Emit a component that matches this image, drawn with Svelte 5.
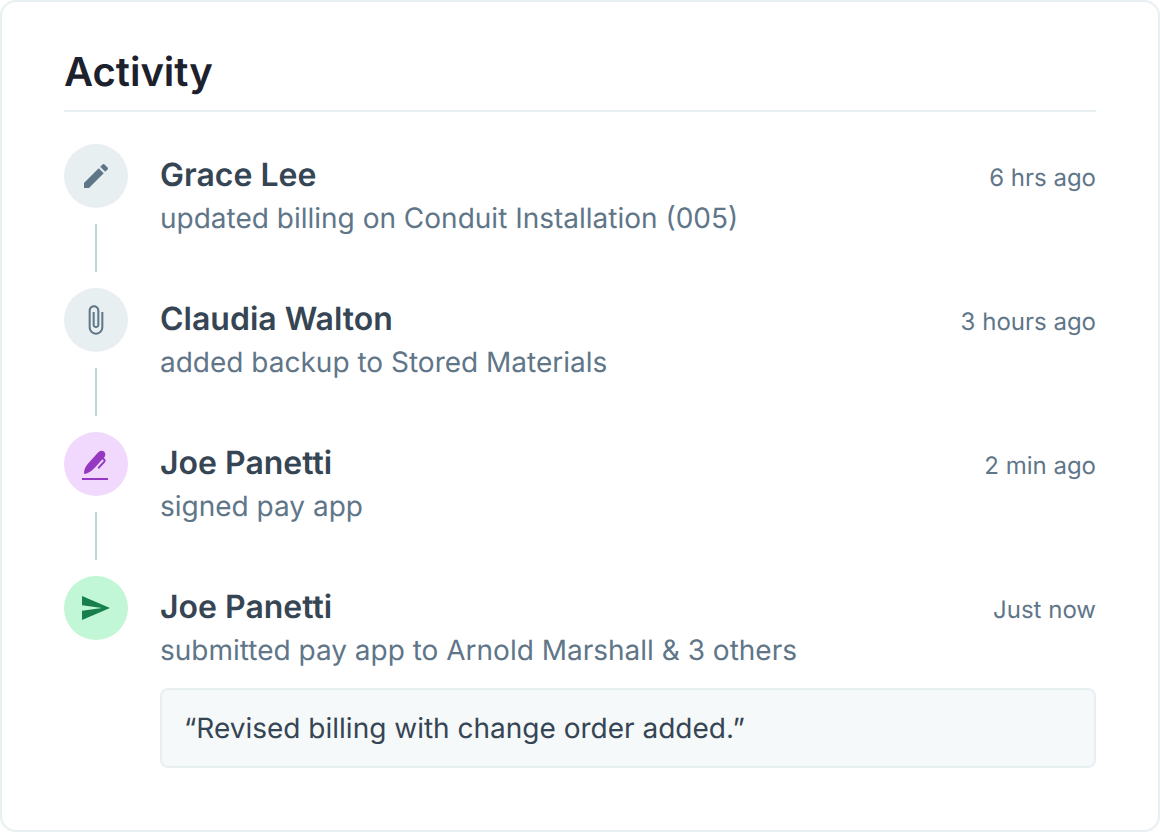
<script>
  const events = [
    { icon: 'pencil', tone: 'neutral', name: 'Grace Lee', action: 'updated billing on Conduit Installation (005)', time: '6 hrs ago' },
    { icon: 'clip', tone: 'neutral', name: 'Claudia Walton', action: 'added backup to Stored Materials', time: '3 hours ago' },
    { icon: 'sign', tone: 'purple', name: 'Joe Panetti', action: 'signed pay app', time: '2 min ago' },
    { icon: 'send', tone: 'green', name: 'Joe Panetti', action: 'submitted pay app to Arnold Marshall & 3 others', time: 'Just now', note: '“Revised billing with change order added.”' }
  ];
</script>

<section class="card" aria-labelledby="activity-title">
  <h2 id="activity-title">Activity</h2>
  <ol>
    {#each events as event, i}
      <li>
        <div class="rail">
          <span class="badge {event.tone}">
            {#if event.icon === 'pencil'}
              <svg viewBox="0 0 24 24" aria-hidden="true"><path d="M3 17.250V21h3.750L17.810 9.940l-3.750-3.750L3 17.250zM20.710 7.040c.39-.39.39-1.020 0-1.410l-2.340-2.340c-.39-.39-1.020-.39-1.410 0l-1.830 1.830 3.750 3.750 1.830-1.830z" /></svg>
            {:else if event.icon === 'clip'}
              <svg viewBox="0.500 0 24 24" aria-hidden="true"><path d="M16.500 6v11.500c0 2.210-1.790 4-4 4s-4-1.790-4-4V5c0-1.380 1.120-2.500 2.500-2.500s2.500 1.120 2.500 2.500v10.500c0 .55-.45 1-1 1s-1-.45-1-1V6H10v9.500c0 1.380 1.120 2.500 2.500 2.500s2.500-1.120 2.500-2.500V5c0-2.210-1.790-4-4-4S7 2.790 7 5v12.500c0 3.040 2.460 5.500 5.500 5.500s5.500-2.460 5.500-5.500V6h-1.500z" /></svg>
            {:else if event.icon === 'sign'}
              <svg viewBox="0 0 32 32" aria-hidden="true">
                <path d="M2 30h26v2H2z" />
                <path d="M4.100 26C3.700 22.500 5.300 18.800 8.100 15.600L17.800 4.800C19.600 2.400 22.500 2 24.200 3.700C25.700 5.200 25.500 7 24.700 8.700L15 19.500C12.200 22.500 8.500 25.600 4.100 26Z" />
                <path class="line" d="M22.800 10.200l1.500 1.500c.6.600.6 1.200 0 1.900L18.800 19.700" />
              </svg>
            {:else}
              <svg viewBox="0.500 0 24 24" aria-hidden="true"><path d="M2.010 21L23 12 2.010 3 2 10l15 2-15 2z" /></svg>
            {/if}
          </span>
          {#if i < events.length - 1}<span class="connector"></span>{/if}
        </div>
        <div class="body">
          <div class="heading">
            <h3>{event.name}</h3>
            <time>{event.time}</time>
          </div>
          <p>{event.action}</p>
          {#if event.note}<blockquote>{event.note}</blockquote>{/if}
        </div>
      </li>
    {/each}
  </ol>
</section>

<style>
  :global(body) { background: #fff; }
  .card {
    box-sizing: border-box;
    min-height: 100vh;
    padding: 46px 62px 62px;
    border: 2px solid #e8eff1;
    border-radius: 16px;
    background: #fff;
    font-family: Inter, sans-serif;
    font-weight: 400;
    text-rendering: geometricPrecision;
    color: #5f7689;
  }
  h2, h3, p, ol, blockquote { margin: 0; }
  h2 {
    padding-bottom: 14px;
    border-bottom: 2px solid #e8eff1;
    font-size: 40px;
    line-height: 48px;
    font-weight: 600;
    color: #1c212d;
  }
  ol { padding: 32px 0 0; list-style: none; }
  li { display: flex; gap: 32px; }
  .rail { display: flex; flex-direction: column; align-items: center; gap: 16px; }
  .badge {
    display: grid;
    place-items: center;
    width: 64px;
    height: 64px;
    border-radius: 50%;
  }
  .neutral { background: #e8eff1; color: #5f7689; }
  .purple { background: #f0d9fd; color: #9538c2; }
  .green { background: #c1f6d6; color: #17804a; }
  svg { width: 32px; height: 32px; fill: currentColor; }
  .line { fill: none; stroke: currentColor; stroke-width: 2; stroke-linecap: round; }
  .connector { width: 2px; height: 48px; margin-bottom: 16px; background: #bfd2d9; }
  .body { flex: 1; min-width: 0; padding-top: 11px; }
  .heading { display: flex; justify-content: space-between; align-items: baseline; gap: 16px; }
  h3 { font-size: 32px; line-height: 40px; font-weight: 600; color: #364554; }
  time { font-size: 24px; line-height: 32px; white-space: nowrap; }
  p { padding-top: 3px; font-size: 28px; line-height: 40px; }
  blockquote {
    margin-top: 18px;
    padding: 18px 22px;
    border: 2px solid #e8eff1;
    border-radius: 8px;
    background: #f5f9fa;
    font-size: 28px;
    line-height: 40px;
    color: #364554;
  }
</style>
